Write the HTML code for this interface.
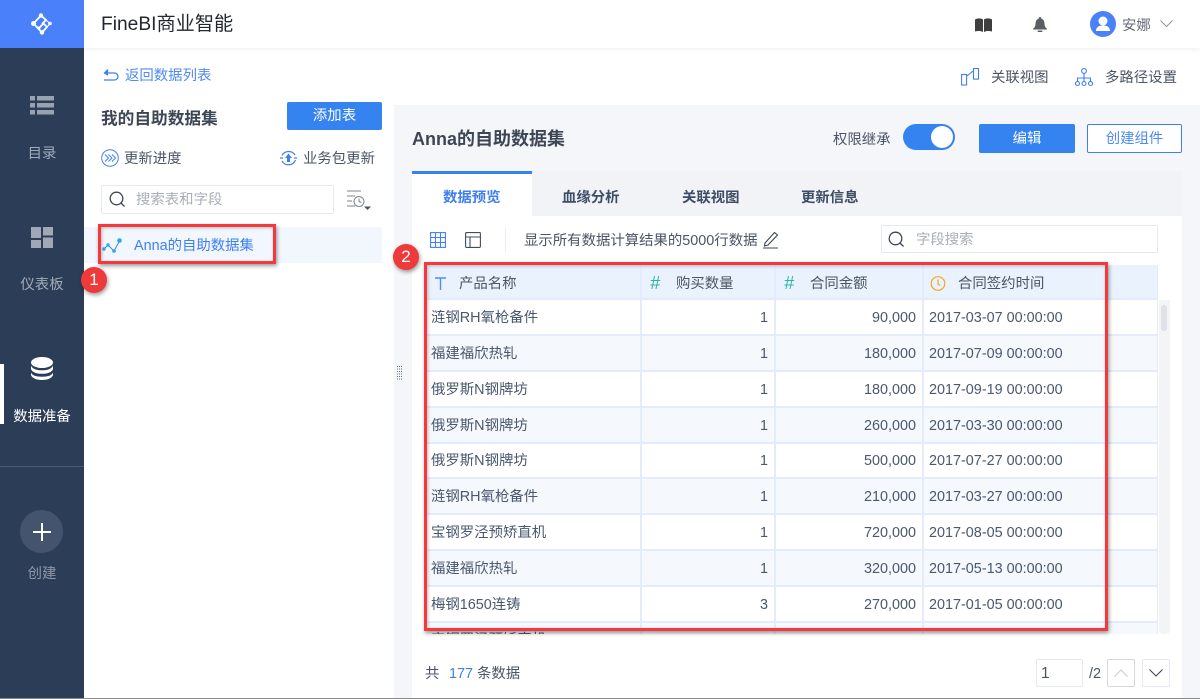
<!DOCTYPE html>
<html lang="zh">
<head>
<meta charset="utf-8">
<title>FineBI</title>
<style>
*{box-sizing:border-box}
html,body{margin:0;padding:0;width:1200px;height:699px;overflow:hidden;background:#fff}
body{position:relative;font-family:"Liberation Sans","Noto Sans CJK SC",sans-serif;font-size:14.4px;color:#3d4d66}
.a{position:absolute;white-space:nowrap;line-height:20px;margin-top:1px}
svg{position:absolute;display:block;overflow:visible}
.side{color:#a3abb8;text-align:center;left:0;width:84px}
.tab{font-weight:bold;color:#3d4d66;top:187px}
.row{position:absolute;left:425px;width:733px;height:36px;border-bottom:2px solid #e2ecfb}
.row.t{background:#f5f8fd}
.c{position:absolute;top:1px;line-height:34px;height:34px;color:#4a5870;white-space:nowrap}
.c1{left:6px}
.c2{left:216px;width:127px;text-align:right}
.c3{left:350px;width:141px;text-align:right}
.c4{left:504px}
.v{position:absolute;top:265px;height:369px;width:2px;background:#e2ecfb}
.box{position:absolute;background:#fff;border:1px solid #e6e9ef;border-radius:2px}
.red{position:absolute;border:3px solid #f4383c;box-shadow:1px 2px 4px rgba(0,0,0,.4),inset 1px 1px 3px rgba(0,0,0,.25)}
.badge{position:absolute;width:26px;height:26px;border-radius:50%;background:#ee3a3a;color:#fff;text-align:center;line-height:26px;font-size:17px;box-shadow:1px 2px 4px rgba(0,0,0,.4)}
</style>
</head>
<body>

<!-- sidebar -->
<div style="position:absolute;left:0;top:0;width:84px;height:699px;background:#2c3d58"></div>
<div style="position:absolute;left:0;top:0;width:84px;height:48px;background:#4b80fb"></div>
<svg style="left:31px;top:13px" width="22" height="22" viewBox="0 0 22 22" fill="none" stroke="#fff" stroke-width="1.800">
<path d="M10 2.500 2.500 10.500 11 19.500l5-5.500-3.500-3.500L8 15M10 2.500 15 7l-4 4"/>
<path d="M15 7l4 3.500-3 3.500" stroke-width="1"/>
<circle cx="10" cy="2.500" r="2.200" fill="#fff" stroke="none"/><circle cx="2.500" cy="10.500" r="2.500" fill="#fff" stroke="none"/><circle cx="11" cy="19.500" r="2.200" fill="#fff" stroke="none"/><circle cx="8" cy="15" r="1.500" fill="#fff" stroke="none"/><circle cx="19" cy="10.500" r="1.300" fill="none" stroke-width="1"/>
</svg>

<svg style="left:30px;top:96px" width="24" height="20" viewBox="0 0 24 20" fill="#99a2b1">
<rect x="0" y="0" width="5" height="4.500"/><rect x="7" y="0" width="17" height="4.500"/>
<rect x="0" y="7" width="5" height="4.500"/><rect x="7" y="7" width="17" height="4.500"/>
<rect x="0" y="14" width="5" height="4.500"/><rect x="7" y="14" width="17" height="4.500"/>
</svg>
<div class="a side" style="top:143px">目录</div>

<svg style="left:31px;top:227px" width="23" height="21" viewBox="0 0 23 21" fill="#a0a8b5">
<rect x="0" y="0" width="10" height="11"/><rect x="12" y="0" width="10" height="8.500"/>
<rect x="0" y="13" width="10" height="8"/><rect x="12" y="10.500" width="10" height="10.500"/>
</svg>
<div class="a side" style="top:274px">仪表板</div>

<div style="position:absolute;left:0;top:364px;width:4px;height:60px;background:#fff"></div>
<svg style="left:30px;top:357px" width="24" height="24" viewBox="0 0 24 24" fill="#fff">
<ellipse cx="12" cy="5.500" rx="11" ry="5.500"/>
<path d="M1 8.500c1 3 5 4.800 11 4.800s10-1.800 11-4.800V12c-1 3-5 4.800-11 4.800S2 15 1 12z"/>
<path d="M1 15.500c1 3 5 4.200 11 4.200s10-1.200 11-4.200v2.500c-1 3-5 5-11 5s-10-2-11-5z"/>
</svg>
<div class="a side" style="top:406px;color:#fff">数据准备</div>

<div style="position:absolute;left:0;top:466px;width:84px;height:1px;background:#4c5a72"></div>
<div style="position:absolute;left:20px;top:510px;width:43px;height:43px;border-radius:50%;background:#44546e"></div>
<div style="position:absolute;left:33px;top:531px;width:18px;height:2px;background:#fff"></div>
<div style="position:absolute;left:41px;top:523px;width:2px;height:18px;background:#fff"></div>
<div class="a side" style="top:563px;color:#8d97a8">创建</div>

<!-- header -->
<div style="position:absolute;left:84px;top:0;width:1116px;height:48px;background:#fff;box-shadow:0 1px 5px rgba(60,70,90,.09)"></div>
<div class="a" style="left:101px;top:13px;margin-top:0;font-size:19.2px;line-height:24px;color:#22282f">FineBI商业智能</div>
<svg style="left:975px;top:18px" width="17" height="14" viewBox="0 0 17 14" fill="#3f3f3f">
<path d="M0 1.500C2.500 0 6 0 8 1.500V14C6 12.700 2.500 12.700 0 13.500zM17 1.500C14.500 0 11 0 9 1.500V14c2-1.300 5.500-1.300 8-.5z"/>
</svg>
<svg style="left:1033px;top:17px" width="14" height="15" viewBox="0 0 14 15" fill="#5a5f66">
<path d="M7 0a1.300 1.300 0 0 1 1.300 1.600C10.700 2.300 11.500 4.400 11.500 7c0 2 .8 3.300 2.500 4.800V12.500H0v-.7C1.700 10.300 2.500 9 2.500 7c0-2.600.8-4.700 3.200-5.400A1.300 1.300 0 0 1 7 0z"/>
<rect x="4.500" y="13.500" width="5" height="1.500" rx=".7"/>
</svg>
<svg style="left:1090px;top:11px" width="26" height="26" viewBox="0 0 26 26">
<circle cx="13" cy="13" r="13" fill="#4b80fb"/>
<circle cx="13" cy="10" r="4.500" fill="#fff"/>
<path d="M6 20c0-4 3-5.500 7-5.500s7 1.500 7 5.500z" fill="#fff"/>
</svg>
<div class="a" style="left:1122px;top:15px;color:#666d78">安娜</div>
<svg style="left:1160px;top:20px" width="13" height="8" viewBox="0 0 13 8" fill="none" stroke="#8f96a0" stroke-width="1">
<path d="M.5.500l6 6 6-6"/>
</svg>

<!-- left panel -->
<svg style="left:103px;top:68px" width="16" height="13" viewBox="0 0 16 13" fill="none" stroke="#3f80f0" stroke-width="1.300">
<path d="M1 12h10.500a3.500 3.500 0 0 0 0-7H2"/>
<path d="M5 1.500 1.500 5 5 7" fill="#3f80f0"/>
</svg>
<div class="a" style="left:125px;top:65px;color:#4f8bf2">返回数据列表</div>
<div class="a" style="left:101px;top:108px;font-size:16.7px;line-height:20px;font-weight:bold;color:#3d4654">我的自助数据集</div>
<div style="position:absolute;left:287px;top:102px;width:95px;height:28px;background:#3583f0;border-radius:2px;color:#fff;text-align:center;line-height:29px">添加表</div>

<svg style="left:101px;top:149px" width="18" height="18" viewBox="0 0 18 18" fill="none" stroke="#3f80f0" stroke-width="1">
<circle cx="9" cy="9" r="8.300"/>
<path d="M4 5.500 7.500 9 4 12.500M7.500 5.500 11 9l-3.500 3.500M11 5.500 14.500 9 11 12.500"/>
</svg>
<div class="a" style="left:124px;top:148px;color:#4a5565">更新进度</div>
<svg style="left:279px;top:149px" width="19" height="18" viewBox="0 0 19 18" fill="none" stroke="#3f80f0" stroke-width="1.200">
<path d="M3 6.500A7.500 7.500 0 0 1 16 6M16.500 11A7.500 7.500 0 0 1 3 12"/>
<path d="M1 9h3M15 9h3"/>
<path d="M9.500 4.500 13 9h-2v4H8V9H6z" fill="#3f80f0" stroke="none"/>
</svg>
<div class="a" style="left:303px;top:148px;color:#4a5565">业务包更新</div>

<div class="box" style="left:101px;top:185px;width:233px;height:29px"></div>
<svg style="left:109px;top:191px" width="17" height="17" viewBox="0 0 17 17" fill="none" stroke="#3a4658" stroke-width="1.300">
<circle cx="7.500" cy="7.500" r="6.300"/><path d="M12 12l3.500 3.500"/>
</svg>
<div class="a" style="left:136px;top:189px;color:#a9afb9">搜索表和字段</div>
<svg style="left:347px;top:190px" width="24" height="22" viewBox="0 0 24 22" fill="none" stroke="#7b8494" stroke-width="1">
<path d="M0 1h14M0 6h8M0 11h5M0 16h8"/>
<circle cx="12" cy="11.500" r="5"/><path d="M12 8.500v3l2.500 1"/>
<path d="M17 16.500h7l-3.500 3.500z" fill="#4a5260" stroke="none"/>
</svg>

<div style="position:absolute;left:84px;top:227px;width:298px;height:36px;background:#f2f7fe"></div>
<svg style="left:102px;top:238px" width="20" height="15" viewBox="0 0 20 15" fill="none" stroke="#3f80f0" stroke-width="1">
<path d="M2 11 6 7l6 6 5.500-10"/>
<circle cx="2" cy="11" r="1.700" fill="#2ea9e0" stroke="none"/><circle cx="6" cy="7" r="1.700" fill="#2ea9e0" stroke="none"/><circle cx="12" cy="13" r="1.800" fill="#2ea9e0" stroke="none"/><circle cx="17.500" cy="2.500" r="2.300" fill="#2ea9e0" stroke="none"/>
</svg>
<div class="a" style="left:134px;top:235px;color:#3f80f0">Anna的自助数据集</div>

<!-- right panel -->
<svg style="left:961px;top:68px" width="18" height="18" viewBox="0 0 18 18" fill="none" stroke="#3f80f0" stroke-width="1.100">
<rect x=".6" y="6.500" width="5" height="10.500"/><rect x="12.500" y=".6" width="5" height="10.500"/><path d="M6 8l6-5"/>
</svg>
<div class="a" style="left:991px;top:67px;color:#4a5565">关联视图</div>
<svg style="left:1075px;top:68px" width="18" height="18" viewBox="0 0 18 18" fill="none" stroke="#3f80f0" stroke-width="1.100">
<circle cx="9" cy="3" r="2.400"/><circle cx="2.500" cy="15.500" r="2"/><circle cx="9" cy="15.500" r="2"/><circle cx="15.500" cy="15.500" r="2"/>
<path d="M9 5.500v8M2.500 13.500V10h13v3.500"/>
</svg>
<div class="a" style="left:1105px;top:67px;color:#4a5565">多路径设置</div>

<div style="position:absolute;left:394px;top:105px;width:806px;height:594px;background:#f5f6f9"></div>
<div class="a" style="left:412px;top:129px;margin-top:0;font-size:18px;font-weight:bold;color:#3d4654">Anna的自助数据集</div>
<div class="a" style="left:833px;top:129px;color:#4a5565">权限继承</div>
<div style="position:absolute;left:903px;top:124px;width:52px;height:26px;border-radius:13px;background:#3583f0"></div>
<div style="position:absolute;left:931px;top:126px;width:22px;height:22px;border-radius:50%;background:#fff"></div>
<div style="position:absolute;left:979px;top:124px;width:96px;height:29px;background:#3583f0;border-radius:2px;color:#fff;text-align:center;line-height:30px">编辑</div>
<div style="position:absolute;left:1087px;top:124px;width:95px;height:29px;background:#fff;border:1px solid #3f80f0;border-radius:2px;color:#4f8bf2;text-align:center;line-height:28px">创建组件</div>

<!-- drag handle -->
<svg style="left:397px;top:366px" width="6" height="15" viewBox="0 0 6 15" fill="#6a7280">
<rect x="0" y="0" width="1" height="1"/><rect x="2" y="0" width="1" height="1"/><rect x="4" y="0" width="1" height="1"/>
<rect x="0" y="2.500" width="1" height="1"/><rect x="2" y="2.500" width="1" height="1"/><rect x="4" y="2.500" width="1" height="1"/>
<rect x="0" y="5" width="1" height="1"/><rect x="2" y="5" width="1" height="1"/><rect x="4" y="5" width="1" height="1"/>
<rect x="0" y="7.500" width="1" height="1"/><rect x="2" y="7.500" width="1" height="1"/><rect x="4" y="7.500" width="1" height="1"/>
<rect x="0" y="10" width="1" height="1"/><rect x="2" y="10" width="1" height="1"/><rect x="4" y="10" width="1" height="1"/>
<rect x="0" y="12.500" width="1" height="1"/><rect x="2" y="12.500" width="1" height="1"/><rect x="4" y="12.500" width="1" height="1"/>
</svg>

<!-- tabs -->
<div style="position:absolute;left:412px;top:171px;width:770px;height:45px;background:#f1f3f7"></div>
<div style="position:absolute;left:412px;top:216px;width:770px;height:483px;background:#fff"></div>
<div style="position:absolute;left:412px;top:171px;width:120px;height:45px;background:#fff;border-top:3px solid #3583f0"></div>
<div class="a tab" style="left:443px;color:#3f80f0">数据预览</div>
<div class="a tab" style="left:562px">血缘分析</div>
<div class="a tab" style="left:682px">关联视图</div>
<div class="a tab" style="left:801px">更新信息</div>

<!-- toolbar -->
<svg style="left:430px;top:232px" width="16" height="16" viewBox="0 0 16 16" fill="none" stroke="#3f80f0" stroke-width="1.100">
<rect x=".6" y=".6" width="14.800" height="14.800"/><path d="M.6 5.500h14.800M.6 10.500h14.800M5.500.6v14.800M10.500.6v14.800"/>
</svg>
<svg style="left:465px;top:232px" width="16" height="16" viewBox="0 0 16 16" fill="none" stroke="#3d4d66" stroke-width="1.100">
<rect x=".6" y=".6" width="14.800" height="14.800" rx="1"/><path d="M.6 5h14.800M5 5v10.400"/>
</svg>
<div style="position:absolute;left:505px;top:228px;width:1px;height:24px;background:#eceef2"></div>
<div class="a" style="left:524px;top:230px;color:#4a5565">显示所有数据计算结果的5000行数据</div>
<svg style="left:763px;top:231px" width="16" height="18" viewBox="0 0 16 18" fill="none" stroke="#3d4654" stroke-width="1.100">
<path d="M2 12 11.500 1.500l3 2.500L5 14l-3.500 1zM0 17h15"/>
</svg>
<div class="box" style="left:881px;top:225px;width:277px;height:28px"></div>
<svg style="left:888px;top:231px" width="17" height="17" viewBox="0 0 17 17" fill="none" stroke="#3a4658" stroke-width="1.300">
<circle cx="7.500" cy="7.500" r="6.300"/><path d="M12 12l3.500 3.500"/>
</svg>
<div class="a" style="left:916px;top:229px;color:#a9afb9">字段搜索</div>

<!-- table -->
<div style="position:absolute;left:425px;top:265px;width:733px;height:35px;background:#e9f2fd;border-bottom:2px solid #e2ecfb"></div>
<svg style="left:435px;top:277px" width="11" height="13" viewBox="0 0 11 13" fill="none" stroke="#4a90f0" stroke-width="1.400"><path d="M0 1h11M5.500 1v12"/></svg>
<div class="a" style="left:459px;top:273px;color:#4a5565">产品名称</div>
<div class="a" style="left:650px;top:273px;margin-top:0;font-size:18px;color:#2fb5a5;font-style:italic">#</div>
<div class="a" style="left:676px;top:273px;color:#4a5565">购买数量</div>
<div class="a" style="left:784px;top:273px;margin-top:0;font-size:18px;color:#2fb5a5;font-style:italic">#</div>
<div class="a" style="left:810px;top:273px;color:#4a5565">合同金额</div>
<svg style="left:930px;top:276px" width="16" height="15" viewBox="0 0 16 15" fill="none" stroke="#f5a623" stroke-width="1.200"><circle cx="8" cy="7.500" r="6.800"/><path d="M8 3.500v4.500l2 1.500"/></svg>
<div class="a" style="left:958px;top:273px;color:#4a5565">合同签约时间</div>

<div class="row" style="top:300px"><span class="c c1">涟钢RH氧枪备件</span><span class="c c2">1</span><span class="c c3">90,000</span><span class="c c4">2017-03-07 00:00:00</span></div>
<div class="row t" style="top:336px"><span class="c c1">福建福欣热轧</span><span class="c c2">1</span><span class="c c3">180,000</span><span class="c c4">2017-07-09 00:00:00</span></div>
<div class="row" style="top:372px"><span class="c c1">俄罗斯N钢牌坊</span><span class="c c2">1</span><span class="c c3">180,000</span><span class="c c4">2017-09-19 00:00:00</span></div>
<div class="row t" style="top:408px"><span class="c c1">俄罗斯N钢牌坊</span><span class="c c2">1</span><span class="c c3">260,000</span><span class="c c4">2017-03-30 00:00:00</span></div>
<div class="row" style="top:443px"><span class="c c1">俄罗斯N钢牌坊</span><span class="c c2">1</span><span class="c c3">500,000</span><span class="c c4">2017-07-27 00:00:00</span></div>
<div class="row t" style="top:479px"><span class="c c1">涟钢RH氧枪备件</span><span class="c c2">1</span><span class="c c3">210,000</span><span class="c c4">2017-03-27 00:00:00</span></div>
<div class="row" style="top:515px"><span class="c c1">宝钢罗泾预矫直机</span><span class="c c2">1</span><span class="c c3">720,000</span><span class="c c4">2017-08-05 00:00:00</span></div>
<div class="row t" style="top:551px"><span class="c c1">福建福欣热轧</span><span class="c c2">1</span><span class="c c3">320,000</span><span class="c c4">2017-05-13 00:00:00</span></div>
<div class="row" style="top:587px"><span class="c c1">梅钢1650连铸</span><span class="c c2">3</span><span class="c c3">270,000</span><span class="c c4">2017-01-05 00:00:00</span></div>
<div style="position:absolute;left:425px;top:623px;width:733px;height:11px;overflow:hidden;background:#f5f8fd"><span class="c c1" style="top:0">宝钢罗泾预矫直机</span></div>

<div class="v" style="left:640px"></div>
<div class="v" style="left:774px"></div>
<div class="v" style="left:922px"></div>
<div class="v" style="left:1157px;width:1px"></div>

<div style="position:absolute;left:1159px;top:300px;width:11px;height:334px;background:#f3f4f6;border-radius:0 0 4px 4px"></div>
<div style="position:absolute;left:1161px;top:305px;width:6px;height:26px;background:#dfe1e6;border-radius:3px"></div>

<!-- footer -->
<div class="a" style="left:425px;top:663px;color:#4a5565">共</div>
<div class="a" style="left:449px;top:663px;color:#3f80f0">177</div>
<div class="a" style="left:477px;top:663px;color:#4a5565">条数据</div>
<div class="box" style="left:1036px;top:659px;width:47px;height:28px"></div>
<div class="a" style="left:1041px;top:663px;font-size:15.5px;color:#4a5565">1</div>
<div class="a" style="left:1089px;top:663px;color:#4a5565">/2</div>
<div class="box" style="left:1107px;top:659px;width:28px;height:28px;border-color:#d3d7de"></div>
<svg style="left:1114px;top:669px" width="14" height="8" viewBox="0 0 14 8" fill="none" stroke="#c9ced6" stroke-width="1.100"><path d="M.5 7.500 7 1l6.500 6.500"/></svg>
<div class="box" style="left:1142px;top:659px;width:28px;height:28px"></div>
<svg style="left:1149px;top:669px" width="14" height="8" viewBox="0 0 14 8" fill="none" stroke="#3d4654" stroke-width="1.100"><path d="M.5.500 7 7 13.500.500"/></svg>
<div style="position:absolute;left:0;top:698px;width:1200px;height:1px;background:#8a8a8a"></div>

<!-- annotations -->
<div class="red" style="left:98px;top:224px;width:178px;height:40px"></div>
<div class="badge" style="left:81px;top:267px">1</div>
<div class="red" style="left:424px;top:262px;width:684px;height:369px"></div>
<div class="badge" style="left:393px;top:244px">2</div>

</body>
</html>
